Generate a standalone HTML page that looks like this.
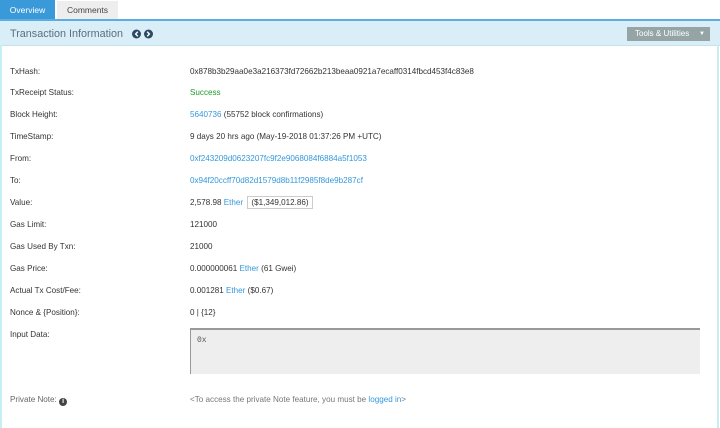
<!DOCTYPE html>
<html><head><style>
body{margin:0;width:720px;height:428px;background:#fff;font-family:"Liberation Sans",Arial,sans-serif;font-size:8.1px;color:#333;position:relative;overflow:hidden}
.a{position:absolute}
a{color:#3498db;text-decoration:none}
.r{position:absolute;left:10px;line-height:12px}
.v{position:absolute;left:190px;line-height:12px}
</style></head><body>
<div class="a" style="left:0;top:0;width:55px;height:19px;background:#3a9ad9;color:#fff;font-size:8.5px;line-height:20px;text-align:center">Overview</div>
<div class="a" style="left:57px;top:1px;width:61px;height:18px;background:#eee;color:#444;font-size:8.5px;line-height:19px;text-align:center">Comments</div>
<div class="a" style="left:0;top:19px;width:720px;height:2px;background:#5dade2"></div>
<div class="a" style="left:0;top:21px;width:720px;height:24px;background:#daeef7;border-bottom:1px solid #c4e3ef"></div>
<div class="a" style="left:0;top:45px;width:2px;height:383px;background:#c7eef2"></div>
<div class="a" style="left:717px;top:45px;width:2px;height:383px;background:#c7eef2"></div>
<div class="a" style="left:10px;top:27px;font-size:10.8px;color:#5a6f80;line-height:14px">Transaction Information</div>
<svg class="a" style="left:132px;top:29px" width="22" height="10"><circle cx="4.5" cy="5" r="4.5" fill="#2c4a63"/><path d="M5.8 2.8 3.6 5 5.8 7.2" stroke="#fff" stroke-width="1.4" fill="none"/><circle cx="16.5" cy="5" r="4.5" fill="#2c4a63"/><path d="M15.2 2.8 17.4 5 15.2 7.2" stroke="#fff" stroke-width="1.4" fill="none"/></svg>
<div class="a" style="left:627px;top:27px;width:83px;height:14px;background:#95a5a6;color:#fff;font-size:8px;line-height:14px"><span style="margin-left:8px">Tools &amp; Utilities</span><span style="position:absolute;right:5px;top:0;font-size:6px">▼</span></div>
<div class="r" style="top:66px">TxHash:</div><div class="v" style="top:66px">0x878b3b29aa0e3a216373fd72662b213beaa0921a7ecaff0314fbcd453f4c83e8</div>
<div class="r" style="top:87px">TxReceipt Status:</div><div class="v" style="top:87px;color:#1e9a2c">Success</div>
<div class="r" style="top:109px">Block Height:</div><div class="v" style="top:109px"><a>5640736</a> (55752 block confirmations)</div>
<div class="r" style="top:131px">TimeStamp:</div><div class="v" style="top:131px">9 days 20 hrs ago (May-19-2018 01:37:26 PM +UTC)</div>
<div class="r" style="top:153px">From:</div><div class="v" style="top:153px"><a>0xf243209d0623207fc9f2e9068084f6884a5f1053</a></div>
<div class="r" style="top:175px">To:</div><div class="v" style="top:175px"><a>0x94f20ccff70d82d1579d8b11f2985f8de9b287cf</a></div>
<div class="r" style="top:197px">Value:</div><div class="v" style="top:197px">2,578.98 <a>Ether</a> <span style="border:1px solid #ccc;padding:1px 3px;margin-left:2px">($1,349,012.86)</span></div>
<div class="r" style="top:219px">Gas Limit:</div><div class="v" style="top:219px">121000</div>
<div class="r" style="top:241px">Gas Used By Txn:</div><div class="v" style="top:241px">21000</div>
<div class="r" style="top:263px">Gas Price:</div><div class="v" style="top:263px">0.000000061 <a>Ether</a> (61 Gwei)</div>
<div class="r" style="top:285px">Actual Tx Cost/Fee:</div><div class="v" style="top:285px">0.001281 <a>Ether</a> ($0.67)</div>
<div class="r" style="top:307px">Nonce &amp; {Position}:</div><div class="v" style="top:307px">0 | {12}</div>
<div class="r" style="top:329px">Input Data:</div>
<div class="a" style="left:190px;top:328px;width:510px;height:46px;background:#eee;border-top:2px solid #999;border-left:1px solid #999;box-sizing:border-box"><span style="position:absolute;left:6px;top:6px;font-family:'Liberation Mono',monospace;font-size:8px;color:#555">0x</span></div>
<div class="r" style="top:394px;color:#666">Private Note: <span style="display:inline-block;width:8px;height:8px;border-radius:50%;background:#444;color:#fff;font-size:7px;line-height:8px;text-align:center;font-weight:bold;vertical-align:-1px">i</span></div>
<div class="v" style="top:394px;color:#777">&lt;To access the private Note feature, you must be <a>logged in</a>&gt;</div>
</body></html>
